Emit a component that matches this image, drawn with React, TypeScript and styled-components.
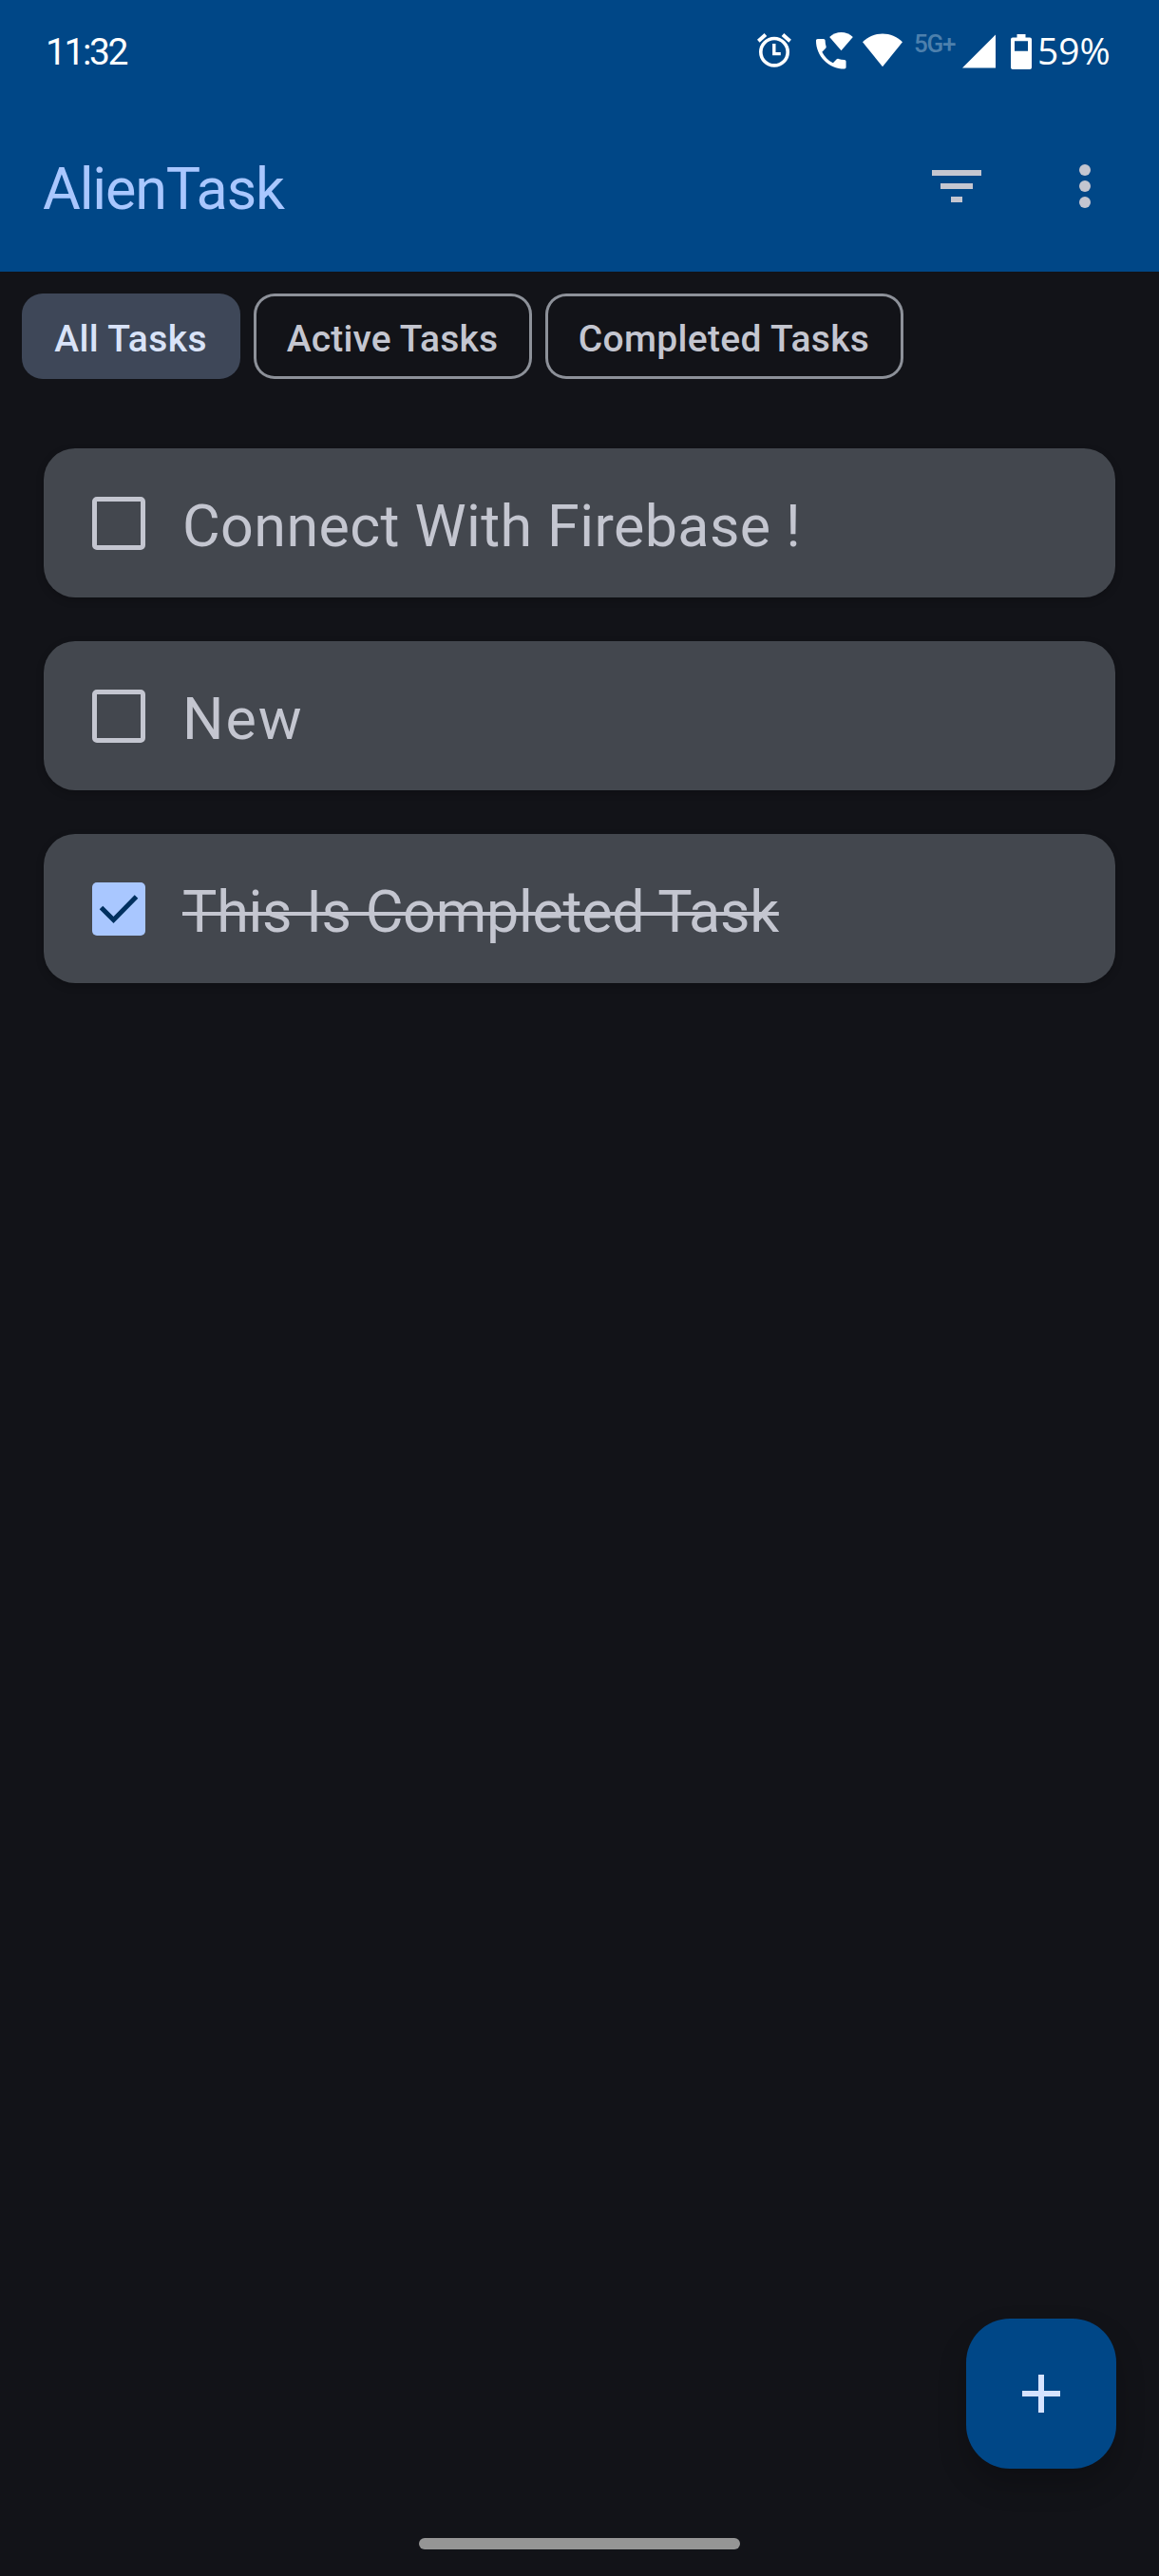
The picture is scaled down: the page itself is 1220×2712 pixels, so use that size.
import React, { useState } from "react";
import styled, { createGlobalStyle, css } from "styled-components";

const color = {
  background: "#121318",
  primaryContainer: "#004787",
  primary: "#a9c7ff",
  onPrimary: "#00305f",
  onPrimaryContainer: "#d6e3ff",
  surfaceVariant: "#43474e",
  onSurfaceVariant: "#c4c6d0",
  secondaryContainer: "#3e4758",
  onSecondaryContainer: "#d9e3f8",
  outline: "#8d9199",
  handle: "#959595",
};

const GlobalStyle = createGlobalStyle`
  *, *::before, *::after { box-sizing: border-box; }
  body {
    margin: 0;
    background: ${color.background};
    font-family: Roboto, "Open Sans", sans-serif;
  }
  button { font: inherit; color: inherit; border: 0; padding: 0; background: none; }
  svg { display: block; flex: none; }
`;

const Screen = styled.div`
  width: 1220px;
  height: 2712px;
  display: flex;
  flex-direction: column;
  overflow: hidden;
  background: ${color.background};
`;

const Header = styled.header`
  flex: none;
  height: 286px;
  background: ${color.primaryContainer};
`;

const StatusBar = styled.div`
  height: 108px;
  padding: 0 50px 0 48px;
  display: flex;
  align-items: center;
  justify-content: space-between;
  color: #fff;
`;

const Clock = styled.span`
  padding-top: 1px;
  font-size: 39px;
  line-height: 48px;
  letter-spacing: -2.4px;
`;

const StatusIcons = styled.div`
  display: flex;
  align-items: center;
`;

const NetworkType = styled.span`
  width: 44px;
  margin-left: 11px;
  margin-right: 7px;
  padding-bottom: 17px;
  font-size: 26px;
  line-height: 30px;
  font-weight: 500;
  letter-spacing: -1.2px;
  white-space: nowrap;
  color: #4d80ad;
`;

const BatteryLevel = styled.span`
  width: 78px;
  margin-left: 6px;
  padding-bottom: 2px;
  font-family: "Open Sans", sans-serif;
  font-size: 39px;
  line-height: 48px;
  white-space: nowrap;
`;

const AppBar = styled.div`
  height: 176px;
  padding: 0 72px 0 45px;
  display: flex;
  align-items: center;
  justify-content: space-between;
`;

const Title = styled.h1`
  margin: 0;
  padding-top: 6px;
  font-size: 61px;
  line-height: 72px;
  font-weight: 400;
  letter-spacing: -1.15px;
  color: ${color.primary};
`;

const Actions = styled.div`
  display: flex;
  align-items: center;
  gap: 103px;
  color: ${color.onSurfaceVariant};
`;

const IconButton = styled.button`
  display: grid;
  place-items: center;
`;

const Filters = styled.nav`
  flex: none;
  display: flex;
  gap: 14px;
  padding: 23px;
`;

const Chip = styled.button<{ $selected: boolean; $width: number; $tracking: number }>`
  width: ${(p) => p.$width}px;
  height: 90px;
  padding-top: 6px;
  padding-right: 1px;
  border-radius: 22px;
  font-size: 39px;
  line-height: 48px;
  font-weight: 500;
  letter-spacing: ${(p) => p.$tracking}px;
  white-space: nowrap;
  ${(p) =>
    p.$selected
      ? css`
          background: ${color.secondaryContainer};
          color: ${color.onSecondaryContainer};
        `
      : css`
          box-shadow: inset 0 0 0 3px ${color.outline};
          color: ${color.onSurfaceVariant};
        `}
`;

const TaskList = styled.ul`
  flex: 1;
  margin: 0;
  padding: 50px 46px 0;
  display: flex;
  flex-direction: column;
  gap: 46px;
  list-style: none;
`;

const TaskCard = styled.li`
  height: 157px;
  padding-left: 51px;
  display: flex;
  align-items: center;
  gap: 39px;
  border-radius: 33px;
  background: ${color.surfaceVariant};
  box-shadow: 0 3px 8px rgba(0, 0, 0, 0.2);
`;

const Checkbox = styled.button<{ $checked: boolean }>`
  flex: none;
  width: 56px;
  height: 56px;
  border-radius: 5px;
  border: ${(p) => (p.$checked ? "0" : `5px solid ${color.onSurfaceVariant}`)};
  background: ${(p) => (p.$checked ? color.primary : "transparent")};
`;

const TaskName = styled.span<{ $done: boolean; $tracking: number }>`
  padding-top: 7px;
  font-size: 61px;
  line-height: 72px;
  letter-spacing: ${(p) => p.$tracking}px;
  white-space: nowrap;
  color: ${color.onSurfaceVariant};
  ${(p) =>
    p.$done &&
    css`
      text-decoration: line-through;
      text-decoration-thickness: 4px;
    `}
`;

const FabRow = styled.div`
  flex: none;
  display: flex;
  justify-content: flex-end;
  padding: 0 45px 73px 0;
`;

const Fab = styled.button`
  width: 158px;
  height: 158px;
  display: grid;
  place-items: center;
  border-radius: 46px;
  background: ${color.primaryContainer};
  box-shadow: 0 16px 30px rgba(0, 0, 0, 0.22);
`;

const GestureBar = styled.div`
  flex: none;
  height: 40px;
  display: flex;
  justify-content: center;

  &::after {
    content: "";
    width: 338px;
    height: 12px;
    border-radius: 6px;
    background: ${color.handle};
  }
`;

const StatusGlyphs = () => (
  <svg width="154" height="40" viewBox="797 34 154 40" fill="#fff">
    <g fill="none" stroke="#fff">
      <circle cx="815" cy="54.7" r="14.2" strokeWidth="3.6" />
      <path d="M814.8 46v10.6h7" strokeWidth="3.4" />
      <path d="M798.3 43.2l7.6-6.6M831.6 43.2l-7.6-6.6" strokeWidth="4" />
    </g>
    <path
      transform="translate(853.7 35.7) scale(1.755)"
      d="M20 15.5c-1.25 0-2.45-.2-3.57-.57-.35-.11-.74-.03-1.02.24l-2.2 2.2c-2.83-1.44-5.15-3.75-6.59-6.58l2.2-2.21c.28-.27.36-.66.25-1.01C8.7 6.45 8.5 5.25 8.5 4c0-.55-.45-1-1-1H4c-.55 0-1 .45-1 1 0 9.39 7.61 17 17 17 .55 0 1-.45 1-1v-3.5c0-.55-.45-1-1-1z"
    />
    <path d="M885.5 53.2L873.2 39c3.6-3.2 7.8-5 12.3-5s8.700 1.800 12.300 5z" />
    <path d="M929 70.200L908 44.200c5.800-5.600 13-8.700 21-8.700s15.200 3.100 21 8.700z" />
  </svg>
);

const SignalGlyph = () => (
  <svg width="35" height="36" viewBox="0 0 35 36" fill="#fff">
    <path d="M0 35.500L35 .5v35z" />
  </svg>
);

const BatteryGlyph = () => (
  <svg width="22" height="37" viewBox="0 0 22 37">
    <path
      fill="#fff"
      fillRule="evenodd"
      d="M6.500 0h9v3.500H20a2 2 0 0 1 2 2V35a2 2 0 0 1-2 2H2a2 2 0 0 1-2-2V5.500a2 2 0 0 1 2-2h4.500zM4 7.300v10.400h14V7.300z"
    />
  </svg>
);

const SignalGroup = styled.div`
  display: flex;
  align-items: center;
  gap: 16px;
`;

type Task = { name: string; done: boolean; tracking: number };

const initialTasks: Task[] = [
  { name: "Connect With Firebase !", done: false, tracking: 0.4 },
  { name: "New", done: false, tracking: 2 },
  { name: "This Is Completed Task", done: true, tracking: -0.25 },
];

const filters = [
  { label: "All Tasks", width: 230, tracking: 0.38 },
  { label: "Active Tasks", width: 293, tracking: 0.15 },
  { label: "Completed Tasks", width: 377, tracking: 0.32 },
];

export default function App() {
  const [filter, setFilter] = useState(0);
  const [tasks, setTasks] = useState(initialTasks);

  const toggle = (name: string) =>
    setTasks((list) => list.map((t) => (t.name === name ? { ...t, done: !t.done } : t)));

  const visible = tasks.filter((t) => filter === 0 || (filter === 2) === t.done);

  return (
    <Screen>
      <GlobalStyle />
      <Header>
        <StatusBar>
          <Clock>11:32</Clock>
          <StatusIcons>
            <StatusGlyphs />
            <NetworkType>5G+</NetworkType>
            <SignalGroup>
              <SignalGlyph />
              <BatteryGlyph />
            </SignalGroup>
            <BatteryLevel>59%</BatteryLevel>
          </StatusIcons>
        </StatusBar>
        <AppBar>
          <Title>AlienTask</Title>
          <Actions>
            <IconButton aria-label="Filter">
              <svg width="52" height="34" viewBox="0 0 52 34" fill="currentColor">
                <path d="M0 0h52v6H0zM9 14h34v6H9zM20 28h12v6H20z" />
              </svg>
            </IconButton>
            <IconButton aria-label="More options">
              <svg width="12" height="46" viewBox="0 0 12 46" fill="currentColor">
                <circle cx="6" cy="6" r="6" />
                <circle cx="6" cy="23" r="6" />
                <circle cx="6" cy="40" r="6" />
              </svg>
            </IconButton>
          </Actions>
        </AppBar>
      </Header>

      <Filters>
        {filters.map((f, i) => (
          <Chip
            key={f.label}
            $selected={i === filter}
            $width={f.width}
            $tracking={f.tracking}
            onClick={() => setFilter(i)}
          >
            {f.label}
          </Chip>
        ))}
      </Filters>

      <TaskList>
        {visible.map((t) => (
          <TaskCard key={t.name}>
            <Checkbox
              role="checkbox"
              aria-checked={t.done}
              aria-label={t.name}
              $checked={t.done}
              onClick={() => toggle(t.name)}
            >
              {t.done && (
                <svg width="56" height="56" viewBox="0 0 56 56" fill="none">
                  <path d="M9.500 26.500L22.500 39.500L46.500 15" stroke={color.onPrimary} strokeWidth="5" />
                </svg>
              )}
            </Checkbox>
            <TaskName $done={t.done} $tracking={t.tracking}>
              {t.name}
            </TaskName>
          </TaskCard>
        ))}
      </TaskList>

      <FabRow>
        <Fab aria-label="Add task">
          <svg width="40" height="40" viewBox="0 0 40 40" fill={color.onPrimaryContainer}>
            <path d="M17 0h6v17h17v6H23v17h-6V23H0v-6h17z" />
          </svg>
        </Fab>
      </FabRow>
      <GestureBar />
    </Screen>
  );
}
